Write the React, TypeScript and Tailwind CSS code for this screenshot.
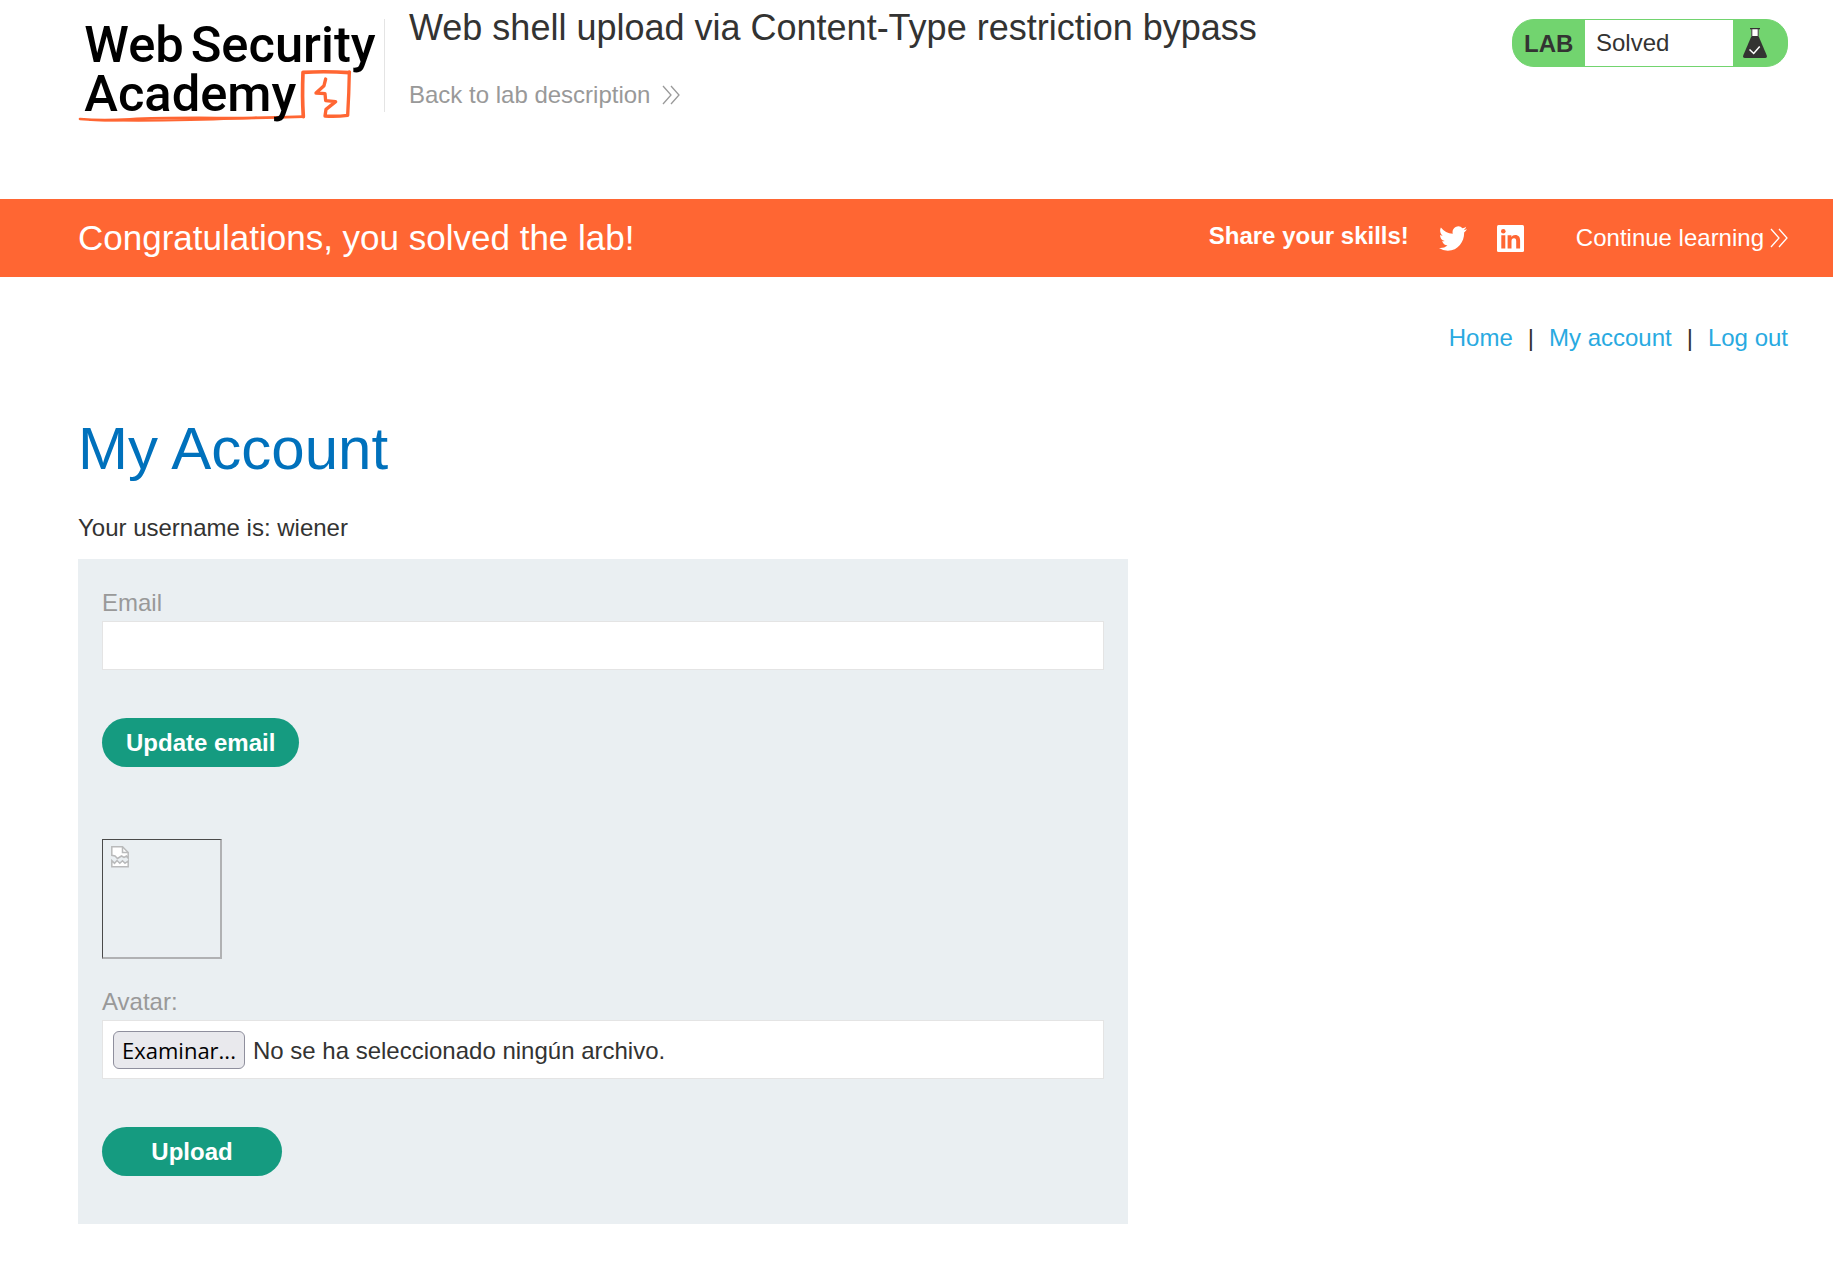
import { useRef, useState } from "react";

function Logo() {
  return (
    <svg
      viewBox="24 45 918 330"
      className="h-[110px] w-[306px] shrink-0 overflow-visible"
      role="img"
      aria-label="Web Security Academy"
    >
      <g fill="none" stroke="#ff6633" strokeLinejoin="round" strokeLinecap="round">
        <path d="M30 357 Q90 363 180 358 T440 354 Q560 355 700 350" strokeWidth="8" />
        <path d="M60 360 Q200 364 360 360 T560 353" strokeWidth="6" />
        <path d="M700 350 Q696 290 699 217 Q770 213 838 218" strokeWidth="11" />
        <path d="M838 216 Q837 280 833 346 Q800 350 765 348 L768 328 L797 305 L767 302 L765 281 L738 279 L762 257 L767 237" strokeWidth="10" />
      </g>
      <g fill="#000000" fontFamily="Roboto, sans-serif" fontWeight="500" fontSize="152">
        <text x="43" y="187">Web</text>
        <text x="362" y="187">Security</text>
        <text x="43" y="332">Academy</text>
      </g>
    </svg>
  );
}

function DoubleChevron() {
  return (
    <svg viewBox="0 0 18 20" className="h-5 w-[18px] shrink-0" fill="none" stroke="currentColor" strokeWidth="1.3" aria-hidden="true">
      <path d="M1 1l8 9-8 9M9 1l8 9-8 9" />
    </svg>
  );
}

function Flask() {
  return (
    <svg viewBox="0 0 24 30" className="h-[30px] w-6" aria-hidden="true">
      <path d="M8.5 1h7v8h-7z" fill="#ffffff" />
      <path d="M7 0h10v1.3H7zM8.3 1h1v7h-1zM14.7 1h1v7h-1z" fill="#333332" />
      <path d="M8.5 8h7l8.2 19.2Q24.500 30 22 30H2Q-.5 30 .3 27.200z" fill="#333332" />
      <path d="M6.500 21.500l4.200 4 6-7" fill="none" stroke="#ffffff" strokeWidth="1.500" />
    </svg>
  );
}

function TwitterIcon() {
  return (
    <svg viewBox="0 0 24 20" className="h-[25px] w-7" preserveAspectRatio="none" fill="currentColor" aria-hidden="true">
      <path d="M23.95 2.57a10 10 0 0 1-2.82.78 4.96 4.96 0 0 0 2.16-2.73c-.95.56-2 .96-3.130 1.190a4.920 4.920 0 0 0-8.380 4.480C7.690 6.100 4.070 4.130 1.640 1.160A4.820 4.820 0 0 0 .97 3.640c0 1.710.87 3.210 2.190 4.100a4.900 4.900 0 0 1-2.230-.62v.06a4.920 4.920 0 0 0 3.950 4.830 5 5 0 0 1-2.210.08 4.940 4.940 0 0 0 4.600 3.420A9.870 9.870 0 0 1 0 17.540a13.990 13.990 0 0 0 7.550 2.210c9.050 0 14-7.500 14-13.980 0-.21 0-.42-.02-.63a9.940 9.940 0 0 0 2.460-2.550z" />
    </svg>
  );
}

function LinkedInIcon() {
  return (
    <svg viewBox="0 0 27 27" className="size-[27px]" aria-hidden="true">
      <rect width="27" height="27" rx="1.500" fill="#ffffff" />
      <g fill="#ff6633">
        <circle cx="6.300" cy="6.200" r="2.300" />
        <path d="M4.300 10.300h4V23.500h-4zM10.600 10.300h3.800V12c.8-1.300 2-2 3.800-2 3.500 0 4.900 2.200 4.900 5.600v7.900h-3.900v-7.200c0-1.700-.5-3-2.200-3-1.800 0-2.500 1.300-2.500 3v7.200h-3.900z" />
      </g>
    </svg>
  );
}

function BrokenImage() {
  return (
    <svg viewBox="0 0 18 22" className="h-[22px] w-[18px]" fill="#ffffff" stroke="#b9babb" strokeWidth="1.500" aria-label="avatar" role="img">
      <path d="M.8.8h10.700l5.700 5.700v5.700L15.500 10l-2.500 1.500-2.500-1.500L6.500 12.500 4 10 .8 9.300z" />
      <path d="M11.500.8v5.700h5.700" fill="none" />
      <path d="M.8 20.800V14.500l2.700 2.800L6 14.500l2.800 2.800 2.700-2.600 2.500 2.600 3.200-2.300v5.800z" />
    </svg>
  );
}

export default function App() {
  const fileInput = useRef<HTMLInputElement>(null);
  const [fileName, setFileName] = useState("");

  return (
    <div className="bg-white font-['Liberation_Sans',Arial,sans-serif] text-2xl leading-9 text-[#333332]">
      <header className="flex items-start pt-[15px] pr-[45px] pb-[74px] pl-[78px]">
        <Logo />
        <div className="mt-1 h-[93px] w-px shrink-0 bg-[#e4e4e4]" />
        <div className="-mt-2 ml-6 flex-1">
          <h1 className="text-4xl leading-[42px]">Web shell upload via Content-Type restriction bypass</h1>
          <a href="#description" className="mt-7 inline-flex items-center gap-3 text-[#999999]">
            Back to lab description
            <DoubleChevron />
          </a>
        </div>
        <div className="mt-1 flex h-12 shrink-0 items-stretch overflow-hidden rounded-[22px] border border-[#72d46f] bg-[#72d46f]">
          <span className="w-[72px] pl-[11px] leading-[48px] font-bold">LAB</span>
          <p className="w-[148px] bg-white pl-[11px] leading-[46px]">Solved</p>
          <span className="flex w-[54px] items-center pl-2.5">
            <Flask />
          </span>
        </div>
      </header>

      <section className="flex h-[78px] items-center bg-[#ff6633] pr-[45px] pl-[78px] text-white">
        <h2 className="flex-1 text-[35px] leading-10">Congratulations, you solved the lab!</h2>
        <span className="pb-1 font-bold">Share your skills!</span>
        <a href="#twitter" aria-label="Share on Twitter" className="ml-[30px]">
          <TwitterIcon />
        </a>
        <a href="#linkedin" aria-label="Share on LinkedIn" className="ml-[30px]">
          <LinkedInIcon />
        </a>
        <a href="#learning" className="ml-[52px] flex items-center gap-1.5">
          Continue learning
          <DoubleChevron />
        </a>
      </section>

      <main className="pr-[45px] pl-[78px]">
        <nav className="flex justify-end gap-[15px] pt-[43px]">
          <a href="#home" className="text-[#29aae1]">Home</a>
          <span>|</span>
          <a href="#account" className="text-[#29aae1]">My account</a>
          <span>|</span>
          <a href="#logout" className="text-[#29aae1]">Log out</a>
        </nav>

        <h1 className="mt-[57px] text-[60px] leading-[72px] text-[#0071bc]">My Account</h1>
        <p className="mt-[25px]">Your username is: wiener</p>

        <div className="mt-[13px] max-w-[1050px] bg-[#eaeff2] px-6 pt-6 pb-12">
          <form onSubmit={(e) => e.preventDefault()}>
            <label htmlFor="email" className="block pt-0.5 text-[#999999]">Email</label>
            <input
              id="email"
              type="email"
              className="block h-[49px] w-full border border-[#e4e4e4] bg-white px-2.5 outline-none"
            />
            <button type="submit" className="mt-12 block h-[49px] min-w-[180px] rounded-full bg-[#159b80] px-6 font-bold text-white">
              Update email
            </button>
          </form>

          <form onSubmit={(e) => e.preventDefault()} className="pt-[72px]">
            <div className="size-[120px] border-t border-r-2 border-b-2 border-l border-t-[#4a4a4a] border-r-[#b0b1b3] border-b-[#b0b1b3] border-l-[#4a4a4a] pt-1.5 pl-2">
              <BrokenImage />
            </div>
            <label htmlFor="avatar" className="mt-[25px] block text-[#999999]">Avatar:</label>
            <div className="flex h-[59px] items-center gap-2 border border-[#e4e4e4] bg-white px-2.5">
              <input
                id="avatar"
                ref={fileInput}
                type="file"
                className="hidden"
                onChange={(e) => setFileName(e.target.files?.[0]?.name ?? "")}
              />
              <button
                type="button"
                onClick={() => fileInput.current?.click()}
                className="h-[38px] rounded-md border border-[#8f8f9d] bg-[#e9e9ed] px-2 font-['Open_Sans','Noto_Sans',sans-serif] text-[22px] leading-9 text-black"
              >
                Examinar...
              </button>
              <span className="pt-0.5">{fileName || "No se ha seleccionado ningún archivo."}</span>
            </div>
            <button type="submit" className="mt-12 block h-[49px] min-w-[180px] rounded-full bg-[#159b80] px-6 font-bold text-white">
              Upload
            </button>
          </form>
        </div>
      </main>
    </div>
  );
}
